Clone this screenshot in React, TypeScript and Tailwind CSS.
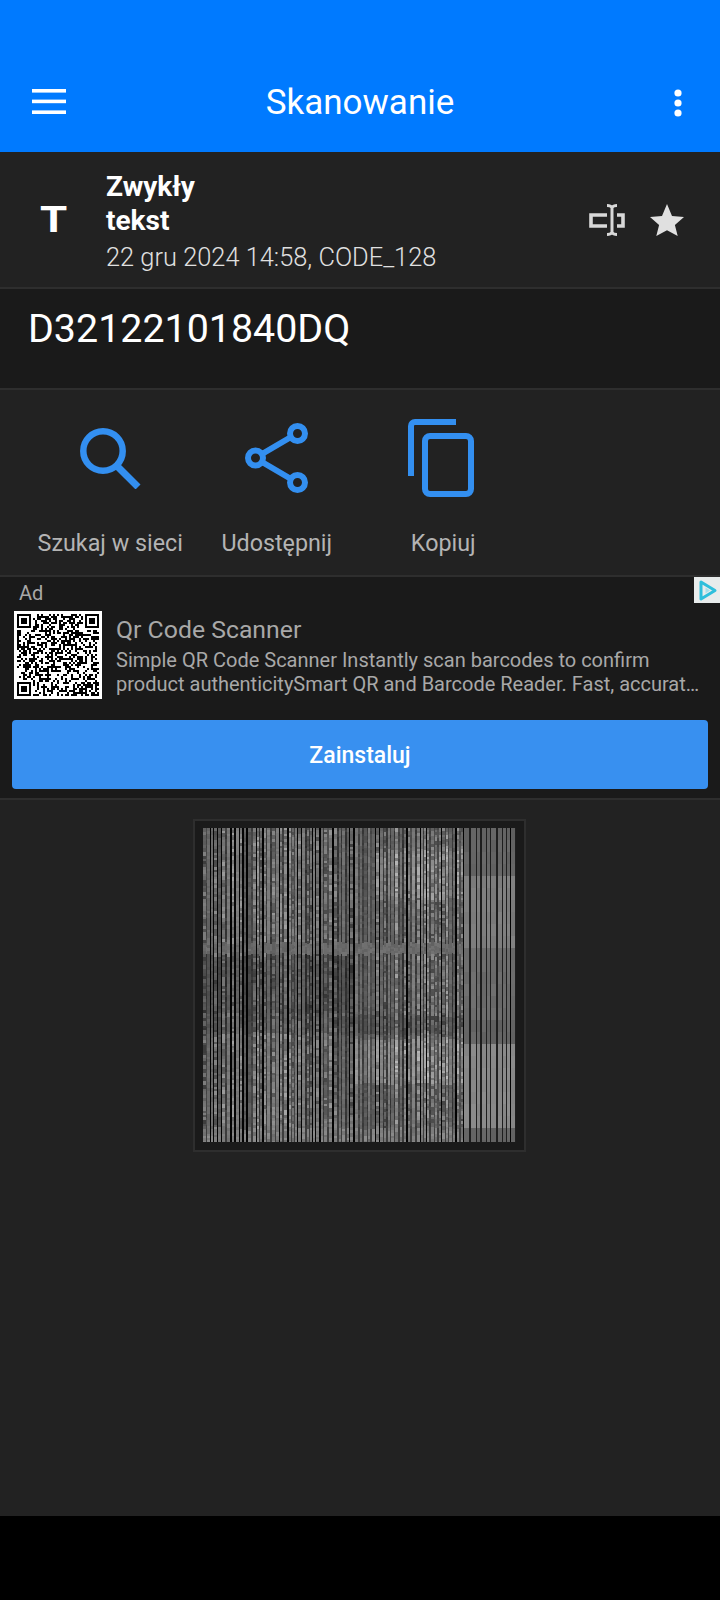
import { useMemo } from "react";

// small seeded generator so the noise pictures stay the same between renders
const makeRandom = (seed: number) => {
  let s = seed;
  return () => {
    s = (s * 1664525 + 1013904223) % 4294967296;
    return s / 4294967296;
  };
};

const Menu = () => (
  <svg width="34" height="26" viewBox="0 0 34 26" fill="#fff" className="-mt-[3px]">
    <rect x="0" y="0" width="34" height="3.6" />
    <rect x="0" y="10.6" width="34" height="3.6" />
    <rect x="0" y="21.4" width="34" height="3.6" />
  </svg>
);

const Dots = () => (
  <svg width="10" height="28" viewBox="0 0 10 28" fill="#fff" className="justify-self-end">
    <circle cx="5" cy="4" r="3.6" />
    <circle cx="5" cy="14" r="3.6" />
    <circle cx="5" cy="24" r="3.6" />
  </svg>
);

const CursorBox = () => (
  <svg width="36" height="32" viewBox="0 0 36 32" fill="none" stroke="#d8d8d8">
    <path d="M18 11H2v11h16" strokeWidth="3.600" />
    <path d="M28 11h6v11h-6" strokeWidth="3.600" />
    <path d="M18 1.500c2 0 4 .5 5 2 1-1.500 3-2 5-2M23 3.500v25M18 30.500c2 0 4-.5 5-2 1 1.500 3 2 5 2" strokeWidth="3" />
  </svg>
);

const Star = () => (
  <svg width="34" height="32" viewBox="0 0 34 32" fill="#e0e0e0">
    <path d="M17 0l5 11.900 12 1-9.100 8.100 2.800 11L17 26.200 6.300 32l2.800-11L0 12.900l12-1z" />
  </svg>
);

const SearchIcon = () => (
  <svg width="61" height="61" viewBox="0 0 61 61" fill="none" stroke="#338ff0" strokeWidth="6.500">
    <circle cx="23" cy="23" r="19.700" />
    <path d="M37 38l21 21" strokeWidth="7" />
  </svg>
);

const ShareIcon = () => (
  <svg width="63" height="70" viewBox="0 0 63 70" fill="none" stroke="#338ff0" strokeWidth="6">
    <circle cx="52.500" cy="10.500" r="7.500" />
    <circle cx="10.500" cy="35" r="7.500" />
    <circle cx="52.500" cy="59.500" r="7.500" />
    <path d="M17 31l29-17M17 39l29 17" />
  </svg>
);

const CopyIcon = () => (
  <svg width="66" height="78" viewBox="0 0 66 78" fill="none" stroke="#338ff0" strokeWidth="6" className="-ml-[4px]">
    <path d="M48 3H7a4 4 0 0 0-4 4v50" />
    <rect x="17" y="17" width="46" height="58" rx="5" />
  </svg>
);

const AdChoices = () => (
  <svg width="26" height="26" viewBox="0 0 26 26" className="block">
    <rect width="26" height="26" fill="#e8ecec" />
    <path d="M7 5l14 8.500L7 22z" fill="none" stroke="#2fbfdc" strokeWidth="3" strokeLinejoin="round" />
    <path d="M11.500 10.500l4.500 3-4.500 3z" fill="#a8e0ea" />
  </svg>
);

// stand-in for the QR code in the ad: 41 modules at 2px with the three finders
const QrCode = () => {
  const rects = useMemo(() => {
    const random = makeRandom(77);
    const size = 41;
    const out: { x: number; y: number }[] = [];
    const inFinder = (x: number, y: number, fx: number, fy: number) =>
      x >= fx - 1 && x <= fx + 7 && y >= fy - 1 && y <= fy + 7;
    const finderCell = (x: number, y: number, fx: number, fy: number) => {
      const dx = x - fx;
      const dy = y - fy;
      if (dx < 0 || dy < 0 || dx > 6 || dy > 6) return false;
      const ring = dx === 0 || dy === 0 || dx === 6 || dy === 6;
      const core = dx >= 2 && dx <= 4 && dy >= 2 && dy <= 4;
      return ring || core;
    };
    const finders = [
      [0, 0],
      [size - 7, 0],
      [0, size - 7],
    ];
    for (let y = 0; y < size; y++) {
      for (let x = 0; x < size; x++) {
        const f = finders.find(([fx, fy]) => inFinder(x, y, fx, fy));
        const on = f ? finderCell(x, y, f[0], f[1]) : random() > 0.54;
        if (on) out.push({ x, y });
      }
    }
    return out;
  }, []);
  return (
    <svg width="88" height="88" viewBox="0 0 88 88" shapeRendering="crispEdges" className="shrink-0">
      <rect width="88" height="88" fill="#fff" />
      {rects.map((r) => (
        <rect key={`${r.x}-${r.y}`} x={3 + r.x * 2} y={3 + r.y * 2} width="2" height="2" fill="#000" />
      ))}
    </svg>
  );
};

// shade of the wide bars at the right end of the scan, by height
const flatShade = (y: number) => {
  if (y < 37) return 100;
  if (y < 113) return 125;
  if (y < 190) return 108;
  if (y < 215) return 100;
  if (y < 298) return 135;
  return 100;
};

// scanned barcode picture: vertical bars with fine noise, a little darker in the middle band
const BarcodeImage = () => {
  const rects = useMemo(() => {
    const random = makeRandom(4242);
    const W = 313;
    const H = 314;
    const out: { x: number; y: number; w: number; h: number; c: number }[] = [];
    let x = 0;
    let light = true;
    while (x < W) {
      const flat = x > 258;
      const w = light
        ? flat
          ? 3 + Math.floor(random() * 3)
          : 2 + Math.floor(random() * 2)
        : 1 + Math.floor(random() * 2);
      const isBlack = !light && random() < 0.5;
      const base = light ? 85 + random() * 40 : 50 + random() * 30;
      const noisy = random() < 0.65;
      let y = 0;
      while (y < H) {
        const h = flat ? 12 : 2 + Math.floor(random() * 3);
        let c: number;
        if (isBlack) {
          c = 3;
        } else if (flat) {
          c = light ? flatShade(y) + (random() - 0.5) * 10 : 30;
        } else {
          c = base + (noisy && light ? (random() - 0.4) * 70 : (random() - 0.5) * 20);
          if (y > 113 && y < 125) c = 95 + random() * 20;
          if (y > 125 && y < 185 && x < 150) c *= 0.78;
          if (y > 185 && y < 205) c *= 0.85;
          if (y > 298) c = light ? 105 + random() * 35 : 60;
          if (light && y > 20 && y < 70 && x > 170) c += 22;
          if (light && y > 210 && y < 255 && x > 150) c += 28;
        }
        out.push({ x, y, w, h, c: Math.max(0, Math.min(225, Math.round(c))) });
        y += h;
      }
      x += w;
      light = !light;
    }
    return out;
  }, []);
  return (
    <svg width="313" height="314" viewBox="0 0 313 314" shapeRendering="crispEdges" className="block">
      {rects.map((r) => (
        <rect key={`${r.x}-${r.y}`} x={r.x} y={r.y} width={r.w} height={r.h} fill={`rgb(${r.c},${r.c},${r.c})`} />
      ))}
    </svg>
  );
};

const Divider = () => <div className="h-[2px] bg-[#2e2e2e]" />;

const actions = [
  { label: "Szukaj w sieci", icon: <SearchIcon /> },
  { label: "Udostępnij", icon: <ShareIcon /> },
  { label: "Kopiuj", icon: <CopyIcon /> },
];

export default function App() {
  return (
    <div className="flex h-[1600px] w-[720px] flex-col bg-black font-['Roboto',sans-serif]">
      <header className="grid h-[152px] shrink-0 grid-cols-[1fr_auto_1fr] items-center bg-[#007aff] pl-[32px] pr-[37px] pt-[54px]">
        <Menu />
        <h1 className="pl-[5px] text-[35px] leading-[40px] font-normal text-white">Skanowanie</h1>
        <Dots />
      </header>

      <div className="flex flex-1 flex-col bg-[#222222]">
        <div className="flex h-[135px] items-center pl-[40px] pr-[36px]">
          <span className="w-[66px] origin-left scale-x-[1.22] text-[36px] leading-none font-bold text-white">T</span>
          <div className="flex-1 pt-[4px]">
            <div className="text-[28px] leading-[34px] font-bold text-white">
              Zwykły
              <br />
              tekst
            </div>
            <div className="mt-[2px] text-[25.4px] leading-[34px] font-light text-[#e0e0e0]">
              22 gru 2024 14:58, CODE_128
            </div>
          </div>
          <div className="flex items-center gap-[25px]">
            <CursorBox />
            <Star />
          </div>
        </div>
        <Divider />

        <div className="h-[99px] bg-[#1a1a1a] pl-[28px] pt-[17px] text-[39.4px] leading-[46px] text-white">
          D32122101840DQ
        </div>
        <Divider />

        <div className="grid h-[185px] grid-cols-[repeat(3,166.5px)] pl-[27px]">
          {actions.map((a) => (
            <div key={a.label} className="flex flex-col items-center">
              <div className="flex h-[130px] items-center justify-center pt-[6px]">{a.icon}</div>
              <span className="mt-[9px] text-[23.3px] leading-[28px] text-[#b4b4b4]">{a.label}</span>
            </div>
          ))}
        </div>
        <Divider />

        <div className="relative h-[221px] bg-[#1a1a1a]">
          <div className="absolute right-0 top-0">
            <AdChoices />
          </div>
          <div className="pl-[19px] pt-[4px] text-[20px] leading-[24px] text-[#a8a8a8]">Ad</div>
          <div className="mt-[6px] flex pl-[14px]">
            <QrCode />
            <div className="ml-[14px] min-w-0 flex-1 pr-[20px]">
              <div className="mt-[4px] text-[24.8px] leading-[30px] text-[#a8a8a8]">Qr Code Scanner</div>
              <div className="mt-[3px] text-[20px] leading-[24px] text-[#a8a8a8]">
                <div className="whitespace-nowrap">Simple QR Code Scanner Instantly scan barcodes to confirm</div>
                <div className="whitespace-nowrap">product authenticitySmart QR and Barcode Reader. Fast, accurat…</div>
              </div>
            </div>
          </div>
          <div className="mx-[12px] mt-[21px] flex h-[69px] items-center justify-center rounded-[4px] bg-[#3890f0] pt-[3px] text-[23px] font-medium text-white">
            Zainstaluj
          </div>
        </div>
        <Divider />

        <div className="flex justify-center pr-[1px] pt-[19px]">
          <div className="border-2 border-[#2e2e2e] bg-[#1a1a1a] px-[8px] pb-[8px] pt-[7px]">
            <BarcodeImage />
          </div>
        </div>
      </div>

      <div className="h-[84px] shrink-0 bg-black" />
    </div>
  );
}
